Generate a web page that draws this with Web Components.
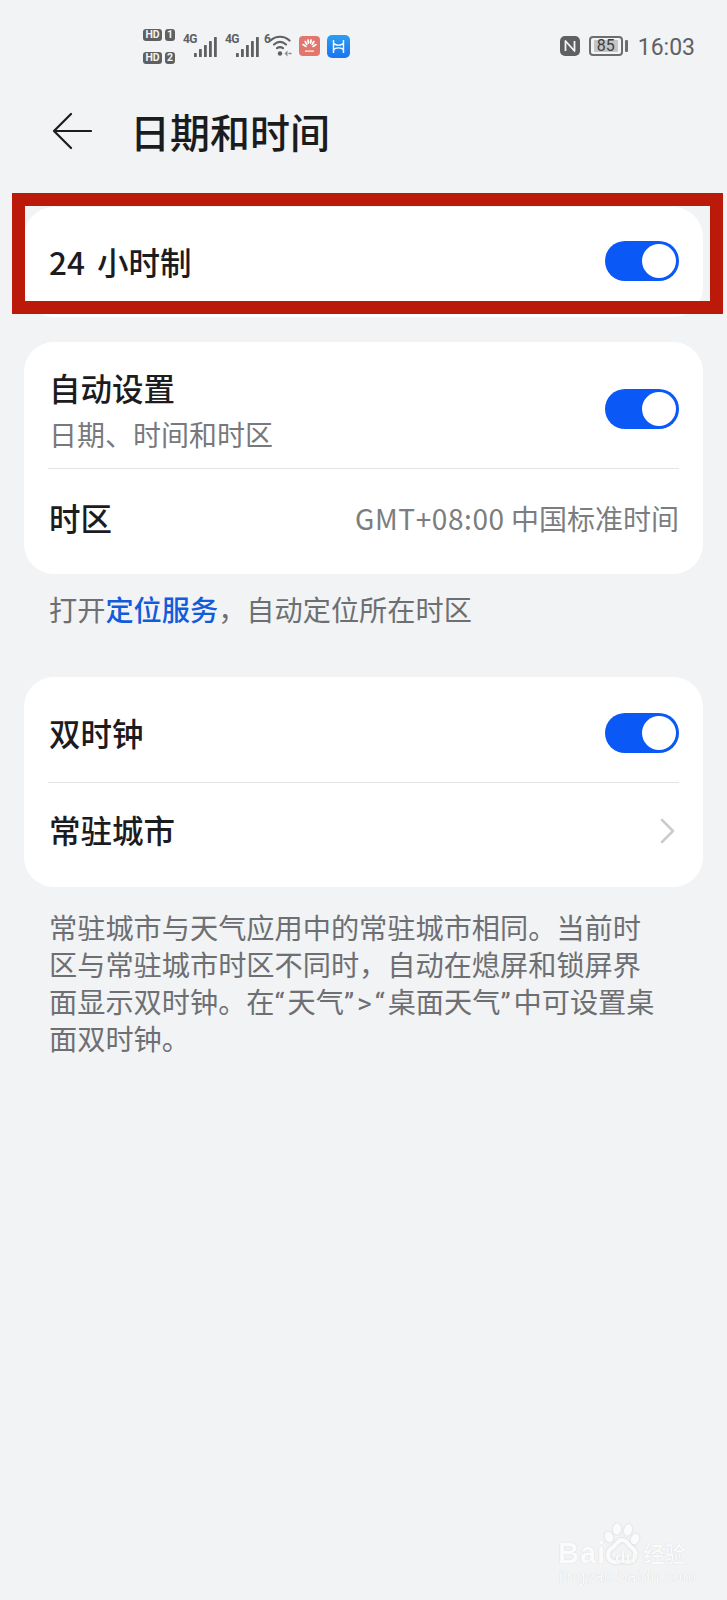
<!DOCTYPE html>
<html lang="zh-CN">
<head>
<meta charset="utf-8">
<title>日期和时间</title>
<style>
    html, body { margin: 0; padding: 0; }
    body {
        width: 727px;
        height: 1600px;
        overflow: hidden;
        background: #f1f3f5;
        font-family: "Noto Sans CJK SC", "Noto Sans", sans-serif;
        color: #1c1c1e;
    }
    .page { position: relative; width: 727px; height: 1600px; display: flex; flex-direction: column; }
    .cards-first { margin-top: 38px; }
    .cards-second { margin-top: 25px; }
    .cards-third { margin-top: 50px; }
    .value { font-size: 28px; color: #7b7d80; }
    .value b { font-weight: 400; letter-spacing: .6px; }
    .q { font-family: Roboto, sans-serif; line-height: 0; letter-spacing: 3px; }
</style>
</head>
<body>
<div class="page">
    <status-bar></status-bar>
    <title-bar>日期和时间</title-bar>

    <settings-card class="cards-first">
        <setting-row height="110" label="24 小时制"><switch-toggle style="margin-bottom:2px"></switch-toggle></setting-row>
    </settings-card>

    <settings-card class="cards-second">
        <setting-row height="127" top="8" label="自动设置" sub="日期、时间和时区" divider><switch-toggle></switch-toggle></setting-row>
        <setting-row height="105" bottom="8" label="时区"><span class="value"><b>GMT+08:00</b> 中国标准时间</span></setting-row>
    </settings-card>
    <hint-text gap="16">打开<a-link>定位服务</a-link>，自动定位所在时区</hint-text>

    <settings-card class="cards-third">
        <setting-row height="106" top="7" label="双时钟" divider><switch-toggle></switch-toggle></setting-row>
        <setting-row height="104" bottom="10" label="常驻城市"><row-arrow style="margin-top:2px"></row-arrow></setting-row>
    </settings-card>
    <hint-text gap="21">常驻城市与天气应用中的常驻城市相同。当前时<br>区与常驻城市时区不同时，自动在熄屏和锁屏界<br>面显示双时钟。在<span class="q">“</span>天气<span class="q">”&gt;“</span>桌面天气<span class="q">”</span>中可设置桌<br>面双时钟。</hint-text>

    <red-frame></red-frame>
    <baidu-mark></baidu-mark>
</div>

<script>
class StatusBar extends HTMLElement {
    constructor() {
        super();
        this.attachShadow({ mode: 'open' });
        this.shadowRoot.innerHTML = `
            <style>
                :host { display: flex; height: 92px; box-sizing: border-box; padding: 0 32px 0 143px; align-items: center; color: #5f6062; font-family: Roboto, sans-serif; }
                .left, .right { display: flex; align-items: center; }
                .right { margin-left: auto; }
                .hd { display: flex; flex-direction: column; gap: 11px; width: 32px; }
                .hd div { display: flex; justify-content: space-between; }
                .hd b { display: block; box-sizing: border-box; height: 12px; width: 19px; text-align: center; font: 700 10.500px/12px Roboto, sans-serif; color: #f1f3f5; background: #5f6062; border-radius: 3px; }
                .hd b + b { width: 10px; }
                .sig { position: relative; width: 34px; height: 22px; margin-left: 8px; }
                .sig + .sig { margin-left: 8px; }
                .sig span { position: absolute; left: 0; top: -2px; font: 700 12px/12px Roboto, sans-serif; letter-spacing: -.6px; }
                .sig svg { position: absolute; right: 0; bottom: 0; }
                .wifi { position: relative; width: 29px; height: 22px; margin-left: 5px; }
                .wifi span { position: absolute; left: 0; top: -2px; font: 700 12px/12px Roboto, sans-serif; }
                .wifi svg { position: absolute; left: 5px; top: 0; }
                .app { display: block; flex: none; }
                .bat { position: relative; width: 34px; height: 20px; box-sizing: border-box; border: 2px solid #6c6d6f; border-radius: 4px; padding: 2px 3px; margin-left: 9px; }
                .bat i { display: block; height: 100%; width: 100%; background: #c4c5c7; border-radius: 1px; }
                .bat span { position: absolute; inset: 0; text-align: center; font: 400 16px/16px Roboto, sans-serif; color: #3f4042; }
                .cap { width: 3px; height: 12px; background: #6c6d6f; border-radius: 1px; margin-left: 2px; }
                .time { font: 400 23px/28px Roboto, sans-serif; margin: 3px 0 0 10px; color: #606163; }
            </style>
            <div class="left">
                <div class="hd"><div><b>HD</b><b>1</b></div><div><b>HD</b><b>2</b></div></div>
                <div class="sig"><span>4G</span>${this.bars()}</div>
                <div class="sig"><span>4G</span>${this.bars()}</div>
                <div class="wifi"><span>6</span>
                    <svg width="24" height="22" viewBox="0 0 24 22" fill="none" stroke="#5f6062" stroke-width="2.200" stroke-linecap="round">
                        <path d="M1.500 5.500C7 .5 15 .5 20.500 5.500"/><path d="M5 9.500C9 6 13 6 17 9.500"/><path d="M8 13.200c2-1.500 4-1.500 6 0"/>
                        <circle cx="11" cy="18.500" r="2.200" fill="#5f6062" stroke="none"/>
                        <path d="M18.500 15.500v6l-3-3zM19.500 17.800h3v1.400h-3z" fill="#8a8b8d" stroke="none"/>
                    </svg>
                </div>
                <svg class="app" style="margin-left:6px" width="21" height="20" viewBox="0 0 21 20">
                    <rect width="21" height="20" rx="4" fill="#e2766c"/>
                    <g fill="#fff"><ellipse cx="9.200" cy="5.500" rx="1" ry="2.600" transform="rotate(-8 9.200 5.500)"/><ellipse cx="11.800" cy="5.500" rx="1" ry="2.600" transform="rotate(8 11.800 5.500)"/><ellipse cx="7" cy="7" rx="1" ry="2.700" transform="rotate(-30 7 7)"/><ellipse cx="14" cy="7" rx="1" ry="2.700" transform="rotate(30 14 7)"/><ellipse cx="5.500" cy="9.500" rx="1" ry="2.700" transform="rotate(-58 5.500 9.500)"/><ellipse cx="15.500" cy="9.500" rx="1" ry="2.700" transform="rotate(58 15.500 9.500)"/><rect x="6" y="14.500" width="9" height="1.200"/></g>
                </svg>
                <svg class="app" style="margin-left:7px" width="23" height="23" viewBox="0 0 23 23">
                    <defs><linearGradient id="hm" x1="0" y1="0" x2="0" y2="1"><stop offset="0" stop-color="#2b9ff2"/><stop offset="1" stop-color="#1b74f0"/></linearGradient></defs>
                    <rect width="23" height="23" rx="5" fill="url(#hm)"/>
                    <path d="M6.500 5v13M16.500 5v13M6.500 7.500c1 3.500 9 3.500 10 0M6.500 15.500c1-3.500 9-3.500 10 0" fill="none" stroke="#fff" stroke-width="1.400"/>
                </svg>
            </div>
            <div class="right">
                <svg width="20" height="20" viewBox="0 0 20 20">
                    <rect width="20" height="20" rx="5" fill="#5f6062"/>
                    <path d="M5.500 15V5l9 10V5" fill="none" stroke="#f1f3f5" stroke-width="1.800" stroke-linejoin="round"/>
                </svg>
                <div class="bat"><i></i><span>85</span></div>
                <div class="cap"></div>
                <div class="time">16:03</div>
            </div>
        `;
    }

    bars() {
        const heights = [4, 8, 12, 16, 20];
        const rects = heights.map((h, i) => `<rect x="${i * 5}" y="${20 - h}" width="2.800" height="${h}" fill="#5f6062" rx=".6"/>`);
        return `<svg width="23" height="20" viewBox="0 0 23 20">${rects.join('')}</svg>`;
    }
}

class TitleBar extends HTMLElement {
    constructor() {
        super();
        this.attachShadow({ mode: 'open' });
        this.shadowRoot.innerHTML = `
            <style>
                :host { display: flex; align-items: center; height: 77px; padding-left: 52px; gap: 38px; }
                svg { display: block; flex: none; }
                .title { font-size: 40px; font-weight: 500; line-height: 56px; color: #1b1c1e; }
            </style>
            <svg width="40" height="38" viewBox="0 0 40 38" fill="none" stroke="#1b1c1e" stroke-width="2.200" stroke-linecap="round" stroke-linejoin="round">
                <path d="M19 2L2 19l17 17M2 19h37"/>
            </svg>
            <div class="title"><slot></slot></div>
        `;
    }
}

class SettingsCard extends HTMLElement {
    constructor() {
        super();
        this.attachShadow({ mode: 'open' });
        this.shadowRoot.innerHTML = `
            <style>
                :host { display: block; margin-left: 24px; margin-right: 24px; background: #fff; border-radius: 30px; overflow: hidden; }
            </style>
            <slot></slot>
        `;
    }
}

class SettingRow extends HTMLElement {
    constructor() {
        super();
        this.attachShadow({ mode: 'open' });
    }

    connectedCallback() {
        const sub = this.getAttribute('sub');
        const top = this.getAttribute('top') || 0;
        const bottom = this.getAttribute('bottom') || 0;
        this.shadowRoot.innerHTML = `
            <style>
                :host { display: block; }
                .row { display: flex; align-items: center; justify-content: space-between; box-sizing: border-box; height: ${this.getAttribute('height')}px; margin: 0 24px; padding: ${top}px 0 ${bottom}px 1px; }
                .row.line { border-bottom: 1.500px solid #e3e4e6; }
                .label { font-size: 31.500px; line-height: 44px; font-weight: 500; color: #1c1c1e; word-spacing: 5px; }
                .sub { font-size: 28px; line-height: 40px; color: #77797c; margin-top: 5px; }
                .text { margin-bottom: 2px; }
                .text.has-sub { margin: 1px 0 0; }
            </style>
            <div class="row ${this.hasAttribute('divider') ? 'line' : ''}">
                <div class="text ${sub ? 'has-sub' : ''}">
                    <div class="label">${this.getAttribute('label')}</div>
                    ${sub ? `<div class="sub">${sub}</div>` : ''}
                </div>
                <slot></slot>
            </div>
        `;
    }
}

class SwitchToggle extends HTMLElement {
    constructor() {
        super();
        this.attachShadow({ mode: 'open' });
        this.shadowRoot.innerHTML = `
            <style>
                :host { display: flex; justify-content: flex-end; box-sizing: border-box; width: 74px; height: 40px; padding: 3px; border-radius: 20px; background: #0a59f7; }
                i { display: block; width: 34px; height: 34px; border-radius: 50%; background: #fff; }
            </style>
            <i></i>
        `;
    }
}

class RowArrow extends HTMLElement {
    constructor() {
        super();
        this.attachShadow({ mode: 'open' });
        this.shadowRoot.innerHTML = `
            <style>
                :host { display: block; width: 15px; height: 26px; margin-right: 4px; }
                svg { display: block; }
            </style>
            <svg width="15" height="26" viewBox="0 0 15 26" fill="none" stroke="#cbcccd" stroke-width="2.600" stroke-linecap="round" stroke-linejoin="round">
                <path d="M2 2l11 11L2 24"/>
            </svg>
        `;
    }
}

class HintText extends HTMLElement {
    constructor() {
        super();
        this.attachShadow({ mode: 'open' });
    }

    connectedCallback() {
        this.shadowRoot.innerHTML = `
            <style>
                :host { display: block; margin: ${this.getAttribute('gap')}px 24px 0 49px; font-size: 28.200px; line-height: 37px; color: #6d6f72; }
            </style>
            <slot></slot>
        `;
    }
}

class RedFrame extends HTMLElement {
    constructor() {
        super();
        this.attachShadow({ mode: 'open' });
        this.shadowRoot.innerHTML = `
            <style>
                :host { display: block; position: absolute; left: 12px; top: 193px; width: 711px; height: 121px; box-sizing: border-box; border: 13.500px solid #bb1a0b; }
            </style>
        `;
    }
}

class BaiduMark extends HTMLElement {
    constructor() {
        super();
        this.attachShadow({ mode: 'open' });
        this.shadowRoot.innerHTML = `
            <style>
                :host { display: block; position: absolute; left: 558px; top: 1523px; width: 130px; height: 62px; color: #fbfbfc; font-family: "Liberation Sans", sans-serif; text-shadow: 0 0 1px rgba(0,0,0,.16); }
                .bai { position: absolute; left: 0; top: 15px; font: 700 29px/30px "Liberation Sans", sans-serif; letter-spacing: 1px; }
                .du { position: absolute; left: 57px; top: 25px; font: 700 17px/20px "Liberation Sans", sans-serif; }
                .cn { position: absolute; left: 85px; top: 16px; font: 500 21.500px/28px "Noto Sans CJK SC", sans-serif; }
                .url { position: absolute; left: 1px; top: 45px; font: 400 16px/18px "Liberation Sans", sans-serif; letter-spacing: .5px; }
                svg { position: absolute; left: 45px; top: 0; filter: drop-shadow(0 0 1px rgba(0,0,0,.14)); }
            </style>
            <svg width="38" height="42" viewBox="0 0 38 42" fill="#fbfbfc">
                <ellipse cx="6" cy="14" rx="4" ry="5.500" transform="rotate(-25 6 14)"/>
                <ellipse cx="14" cy="6" rx="4" ry="5.800"/>
                <ellipse cx="25" cy="7" rx="4" ry="5.800" transform="rotate(12 25 7)"/>
                <ellipse cx="32" cy="16" rx="4" ry="5.500" transform="rotate(25 32 16)"/>
                <path d="M19 17c5 0 6 5 10 8 6 4 4 14-4 14-3 0-4-1-6-1s-4 2-8 1c-8-2-7-11-2-14 5-3 5-8 10-8z" fill="none" stroke="#fbfbfc" stroke-width="4"/>
            </svg>
            <div class="bai">Bai</div>
            <div class="du">du</div>
            <div class="cn">经验</div>
            <div class="url">jingyan.baidu.com</div>
        `;
    }
}

class ALink extends HTMLElement {
    constructor() {
        super();
        this.attachShadow({ mode: 'open' });
        this.shadowRoot.innerHTML = `<style>:host { display: inline; color: #125cdc; font-weight: 500; }</style><slot></slot>`;
    }
}

customElements.define('status-bar', StatusBar);
customElements.define('title-bar', TitleBar);
customElements.define('settings-card', SettingsCard);
customElements.define('setting-row', SettingRow);
customElements.define('switch-toggle', SwitchToggle);
customElements.define('row-arrow', RowArrow);
customElements.define('hint-text', HintText);
customElements.define('red-frame', RedFrame);
customElements.define('baidu-mark', BaiduMark);
customElements.define('a-link', ALink);
</script>
</body>
</html>
